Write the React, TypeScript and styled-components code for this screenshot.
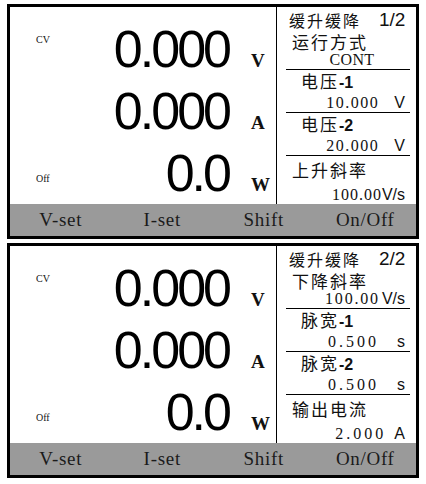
import styled, { createGlobalStyle } from 'styled-components';

const GlobalStyle = createGlobalStyle`
    html, body {
        margin: 0;
        padding: 0;
        background: #ffffff;
    }
    body {
        font-family: 'Liberation Serif', serif;
        color: #111111;
    }
`;

const Page = styled.div`
    display: flex;
    flex-direction: column;
    gap: 4px;
    padding: 4px 0 0 7px;
    width: 412px;
`;

const Screen = styled.div`
    display: flex;
    flex-direction: column;
    border: 3px solid #000000;
    background: #ffffff;
`;

const Main = styled.div`
    display: flex;
    height: 197px;
    overflow: hidden;
`;

const Readings = styled.div`
    display: flex;
    flex-direction: column;
    width: 267px;
    padding-top: 11px;
    box-sizing: border-box;
    border-right: 1px solid #000000;
`;

const ReadingRow = styled.div`
    display: flex;
    align-items: baseline;
    height: 62px;
    padding-left: 26px;
`;

type StatusProps = {
    $top: boolean;
};

const Status = styled.div<StatusProps>`
    flex: 1;
    font-family: 'Liberation Serif', serif;
    font-size: 10px;
    line-height: 10px;
    align-self: ${({ $top }) => ($top ? 'flex-start' : 'baseline')};
    margin-top: ${({ $top }) => ($top ? '17px' : '0')};
    transform: translateY(${({ $top }) => ($top ? '0' : '-9px')});
`;

const BigValue = styled.div`
    font-family: 'Liberation Sans', sans-serif;
    font-size: 52px;
    line-height: 62px;
    letter-spacing: -3px;
    color: #000000;
`;

const Unit = styled.div`
    width: 25px;
    margin-left: 22px;
    font-family: 'Liberation Serif', serif;
    font-weight: bold;
    font-size: 19px;
`;

const Side = styled.div`
    display: flex;
    flex-direction: column;
    flex: 1;
`;

const Title = styled.div`
    display: flex;
    align-items: center;
    height: 29px;
    padding-left: 12px;
    font-family: 'Noto Sans CJK SC', sans-serif;
    font-size: 16px;
    letter-spacing: 2px;
`;

const PageNo = styled.span`
    margin-left: 18px;
    font-family: 'Liberation Sans', sans-serif;
    font-size: 19px;
    letter-spacing: 0;
`;

type ItemProps = {
    $last: boolean;
};

const Item = styled.div<ItemProps>`
    display: flex;
    flex-direction: column;
    margin: 0 6px 0 9px;
    padding-top: ${({ $last }) => ($last ? '3px' : '0')};
    border-bottom: ${({ $last }) => ($last ? 'none' : '1px solid #000000')};
`;

type LabelProps = {
    $indent: boolean;
    $first: boolean;
};

const Label = styled.div<LabelProps>`
    padding-left: ${({ $indent }) => ($indent ? '15px' : '6px')};
    height: ${({ $first }) => ($first ? '19px' : '21px')};
    line-height: ${({ $first }) => ($first ? '19px' : '21px')};
    font-family: 'Noto Sans CJK SC', sans-serif;
    font-size: 17px;
    letter-spacing: 2px;
    white-space: nowrap;
`;

const LabelSuffix = styled.span`
    font-family: 'Liberation Sans', sans-serif;
    font-weight: bold;
    font-size: 16px;
    letter-spacing: 0;
`;

type ValueLineProps = {
    $height: number;
    $center: boolean;
    $gap: number;
};

const ValueLine = styled.div<ValueLineProps>`
    display: flex;
    align-items: flex-end;
    justify-content: ${({ $center }) => ($center ? 'center' : 'flex-end')};
    gap: ${({ $gap }) => $gap}px;
    height: ${({ $height }) => $height}px;
    line-height: 16px;
    padding: ${({ $center }) => ($center ? '0 0 1px 8px' : '0 5px 1px 0')};
    white-space: nowrap;
`;

type NumProps = {
    $spacing: number;
};

const Num = styled.span<NumProps>`
    font-family: 'Liberation Serif', serif;
    font-size: 16px;
    letter-spacing: ${({ $spacing }) => $spacing}px;
`;

const Mode = styled.span`
    font-family: 'Liberation Serif', serif;
    font-size: 16px;
    letter-spacing: 0.3px;
`;

const ValueUnit = styled.span`
    font-family: 'Liberation Sans', sans-serif;
    font-size: 16px;
`;

const SoftKeys = styled.div`
    display: grid;
    grid-template-columns: repeat(4, 1fr);
    height: 32px;
    background: #9a9a9a;
`;

const SoftKey = styled.div`
    display: flex;
    align-items: center;
    justify-content: center;
    font-family: 'Liberation Serif', serif;
    font-size: 19px;
    letter-spacing: 0.7px;
    color: #1a1a1a;
`;

type SettingItem = {
    label: string;
    suffix?: string;
    indent?: boolean;
    mode?: string;
    num?: string;
    unit?: string;
    gap?: number;
    spacing?: number;
};

type ScreenData = {
    page: string;
    items: SettingItem[];
};

const screens: ScreenData[] = [
    {
        page: '1/2',
        items: [
            { label: '运行方式', mode: 'CONT' },
            { label: '电压', suffix: '-1', indent: true, num: '10.000', unit: 'V', gap: 15, spacing: 1.5 },
            { label: '电压', suffix: '-2', indent: true, num: '20.000', unit: 'V', gap: 15, spacing: 1.5 },
            { label: '上升斜率', num: '100.00', unit: 'V/s', gap: 0, spacing: 1 },
        ],
    },
    {
        page: '2/2',
        items: [
            { label: '下降斜率', num: '100.00', unit: 'V/s', gap: 2, spacing: 1.8 },
            { label: '脉宽', suffix: '-1', indent: true, num: '0.500', unit: 's', gap: 18, spacing: 3 },
            { label: '脉宽', suffix: '-2', indent: true, num: '0.500', unit: 's', gap: 18, spacing: 3 },
            { label: '输出电流', num: '2.000', unit: 'A', gap: 8, spacing: 3 },
        ],
    },
];

const readings = [
    { status: 'CV', value: '0.000', unit: 'V' },
    { status: '', value: '0.000', unit: 'A' },
    { status: 'Off', value: '0.0', unit: 'W' },
];

const keys = ['V-set', 'I-set', 'Shift', 'On/Off'];

// first row is tighter, last row takes what is left of the panel
const valueHeight = (index: number, count: number) => {
    if (index === 0) return 17;
    if (index === count - 1) return 23;
    return 20;
};

const PowerScreen: React.FC<{ data: ScreenData }> = ({ data }) => (
    <Screen>
        <Main>
            <Readings>
                {readings.map((r, i) => (
                    <ReadingRow key={r.unit}>
                        <Status $top={i === 0}>{r.status}</Status>
                        <BigValue>{r.value}</BigValue>
                        <Unit>{r.unit}</Unit>
                    </ReadingRow>
                ))}
            </Readings>
            <Side>
                <Title>
                    缓升缓降
                    <PageNo>{data.page}</PageNo>
                </Title>
                {data.items.map((item, i) => {
                    const first = i === 0;
                    const last = i === data.items.length - 1;
                    return (
                        <Item key={item.label + (item.suffix ?? '')} $last={last}>
                            <Label $indent={!!item.indent} $first={first}>
                                {item.label}
                                {item.suffix && <LabelSuffix>{item.suffix}</LabelSuffix>}
                            </Label>
                            <ValueLine
                                $height={valueHeight(i, data.items.length)}
                                $center={!!item.mode}
                                $gap={item.gap ?? 0}
                            >
                                {item.mode ? (
                                    <Mode>{item.mode}</Mode>
                                ) : (
                                    <>
                                        <Num $spacing={item.spacing ?? 1}>{item.num}</Num>
                                        <ValueUnit>{item.unit}</ValueUnit>
                                    </>
                                )}
                            </ValueLine>
                        </Item>
                    );
                })}
            </Side>
        </Main>
        <SoftKeys>
            {keys.map(k => (
                <SoftKey key={k}>{k}</SoftKey>
            ))}
        </SoftKeys>
    </Screen>
);

const App = () => (
    <>
        <GlobalStyle />
        <Page>
            {screens.map(s => (
                <PowerScreen key={s.page} data={s} />
            ))}
        </Page>
    </>
);

export default App;
